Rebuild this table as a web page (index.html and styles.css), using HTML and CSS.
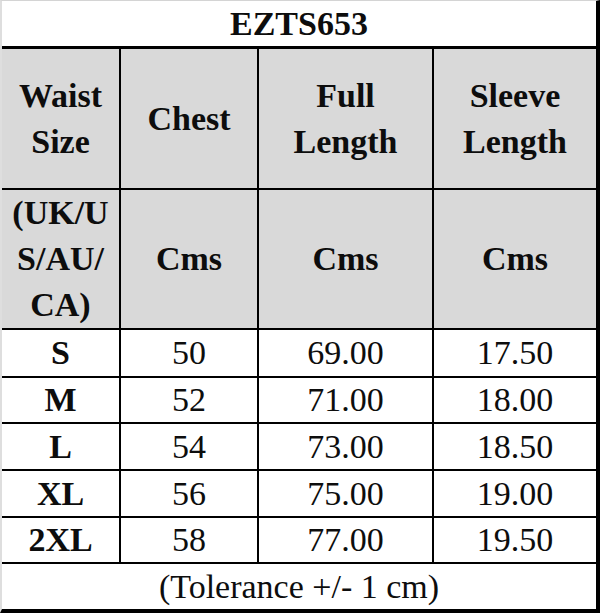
FILE: index.html
```html
<!DOCTYPE html>
<html>
<head>
<meta charset="utf-8">
<link rel="stylesheet" href="styles.css">
</head>
<body>
<div class="sheet">
  <div class="cell title bold">EZTS653</div>

  <div class="cell head bold">Waist<br>Size</div>
  <div class="cell head bold">Chest</div>
  <div class="cell head bold">Full<br>Length</div>
  <div class="cell head bold">Sleeve<br>Length</div>

  <div class="cell head bold">(UK/U<br>S/AU/<br>CA)</div>
  <div class="cell head bold">Cms</div>
  <div class="cell head bold">Cms</div>
  <div class="cell head bold">Cms</div>

  <div class="cell bold">S</div><div class="cell">50</div><div class="cell">69.00</div><div class="cell">17.50</div>
  <div class="cell bold">M</div><div class="cell">52</div><div class="cell">71.00</div><div class="cell">18.00</div>
  <div class="cell bold">L</div><div class="cell">54</div><div class="cell">73.00</div><div class="cell">18.50</div>
  <div class="cell bold">XL</div><div class="cell">56</div><div class="cell">75.00</div><div class="cell">19.00</div>
  <div class="cell bold">2XL</div><div class="cell">58</div><div class="cell">77.00</div><div class="cell">19.50</div>

  <div class="cell note">(Tolerance +/- 1 cm)</div>
</div>
</body>
</html>
```

FILE: styles.css
```css
html, body {
  margin: 0;
  padding: 0;
  background: #fff;
}

.sheet {
  box-sizing: border-box;
  width: 600px;
  height: 613px;
  border-top: 1px solid #d4d4d4;
  border-left: 2px solid #dedede;
  border-right: 4px solid #000;
  border-bottom: 4px solid #000;
  background: #000;
  display: grid;
  grid-template-columns: 117px 136px 173px 162px;
  grid-template-rows: 46px 139px 138px 46px 44px 45px 45px 44px 45px;
  gap: 2px;
  font-family: "Liberation Serif", "Times New Roman", serif;
  font-size: 34px;
  color: #0d0d0d;
}

.cell {
  background: #fff;
  display: flex;
  align-items: center;
  justify-content: center;
  text-align: center;
  line-height: 46px;
  overflow: visible;
}

.bold {
  font-weight: bold;
}

.title {
  grid-column: 1 / -1;
  box-sizing: border-box;
  border-bottom: 1px solid #000;
}

.head {
  background: #d9d9d9;
}

.note {
  grid-column: 1 / -1;
}
```
